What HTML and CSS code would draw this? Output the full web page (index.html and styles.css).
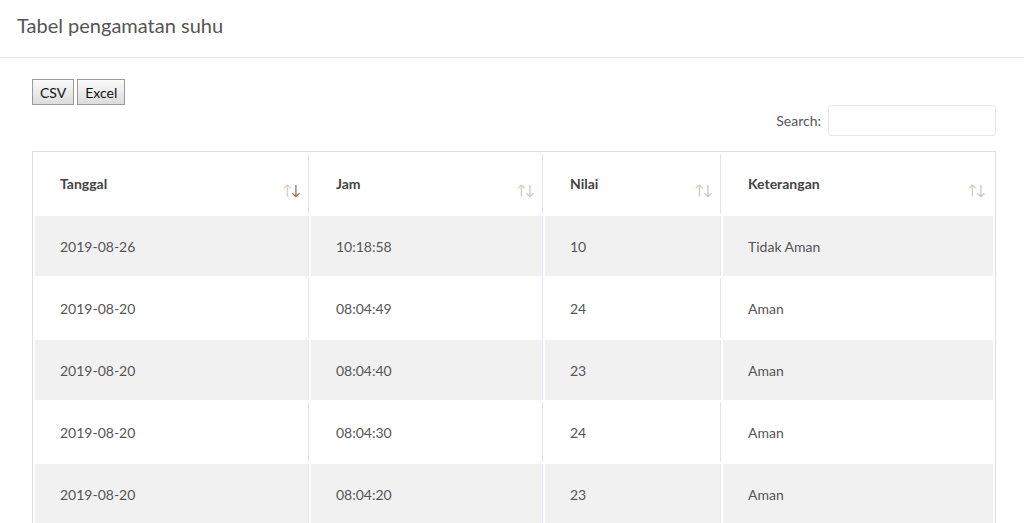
FILE: index.html
```html
<!DOCTYPE html>
<html lang="id">
<head>
<meta charset="utf-8">
<title>Tabel pengamatan suhu</title>
<link rel="stylesheet" href="styles.css">
</head>
<body>
<div class="panel">
  <div class="panel-head">
    <h2 class="panel-title">Tabel pengamatan suhu</h2>
  </div>
  <div class="panel-body">
    <div class="buttons">
      <button class="btn">CSV</button>
      <button class="btn">Excel</button>
    </div>
    <div class="filter">
      <label class="filter-label">Search:</label>
      <input class="filter-input" type="search">
    </div>
    <table class="data">
      <thead>
        <tr>
          <th class="c1">Tanggal<span class="sort"><span class="up">↑</span><span class="down active">↓</span></span></th>
          <th class="c2">Jam<span class="sort"><span class="up">↑</span><span class="down">↓</span></span></th>
          <th class="c3">Nilai<span class="sort"><span class="up">↑</span><span class="down">↓</span></span></th>
          <th class="c4">Keterangan<span class="sort"><span class="up">↑</span><span class="down">↓</span></span></th>
        </tr>
      </thead>
      <tbody>
        <tr class="odd"><td>2019-08-26</td><td>10:18:58</td><td>10</td><td>Tidak Aman</td></tr>
        <tr><td>2019-08-20</td><td>08:04:49</td><td>24</td><td>Aman</td></tr>
        <tr class="odd"><td>2019-08-20</td><td>08:04:40</td><td>23</td><td>Aman</td></tr>
        <tr><td>2019-08-20</td><td>08:04:30</td><td>24</td><td>Aman</td></tr>
        <tr class="odd"><td>2019-08-20</td><td>08:04:20</td><td>23</td><td>Aman</td></tr>
      </tbody>
    </table>
  </div>
</div>
</body>
</html>
```

FILE: styles.css
```css
html, body {
  margin: 0;
  padding: 0;
  background: #fff;
  overflow: hidden;
}
body {
  font-family: Lato, "Open Sans", sans-serif;
  color: #555;
  font-size: 14px;
}
.panel-head {
  height: 57px;
  border-bottom: 1px solid #e6e6e6;
  display: flex;
  align-items: center;
  padding-left: 17px;
}
.panel-title {
  margin: 0;
  font-size: 20px;
  font-weight: 400;
  color: #555;
  position: relative;
  top: -4px;
}
.panel-body {
  padding: 21px 28px 0 32px;
}
.buttons {
  display: flex;
  gap: 3px;
}
.btn {
  font-family: Lato, "Open Sans", sans-serif;
  font-size: 14px;
  color: #111;
  height: 26px;
  padding: 0 7px;
  border: 1px solid #9a9a9a;
  border-radius: 0;
  background: linear-gradient(#fafafa, #dcdcdc);
}
.filter {
  display: flex;
  justify-content: flex-end;
  align-items: center;
  gap: 7px;
  margin-top: 0;
}
.filter-label {
  font-size: 14px;
  color: #555;
}
.filter-input {
  width: 168px;
  height: 31px;
  box-sizing: border-box;
  border: 1px solid #e6e6e6;
  border-radius: 3px;
  outline: none;
}
.data {
  margin-top: 15px;
  width: 100%;
  border: 1px solid #dedede;
  border-collapse: separate;
  border-spacing: 2px;
  table-layout: fixed;
}
.data th, .data td {
  text-align: left;
  padding: 0 0 0 25px;
  border-right: 1px solid #e6e4ee;
  vertical-align: middle;
}
.data th:last-child, .data td:last-child {
  border-right: 0;
}
.data th {
  position: relative;
  height: 58px;
  font-size: 14px;
  font-weight: 700;
  color: #444;
  padding-bottom: 2px;
}
.data .c1 { width: 248px; }
.data .c2 { width: 206px; }
.data .c3 { width: 150px; }
.data td {
  height: 60px;
  font-size: 14px;
  color: #555;
}
.data tr.odd td {
  background: #f1f1f1;
}
.sort {
  position: absolute;
  right: 9px;
  top: 27px;
  font-size: 14px;
  font-weight: 400;
  letter-spacing: -2px;
}
.sort .up { color: #d2c7b5; }
.sort .down { color: #c9c1cf; }
.sort .down.active { color: #8a6a55; }
```
